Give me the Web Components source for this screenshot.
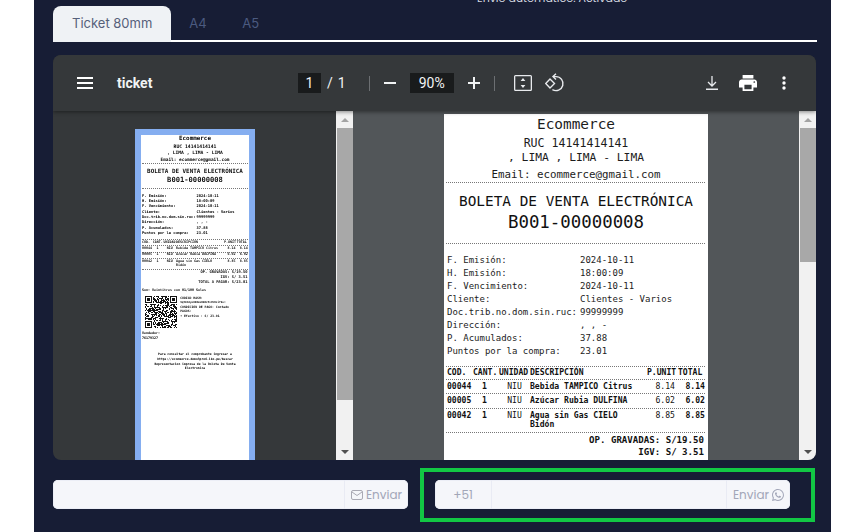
<!DOCTYPE html>
<html lang="es">
<head>
<meta charset="utf-8">
<title>Ticket</title>
<style>
html, body { margin: 0; padding: 0; background: #fff; height: 532px; overflow: hidden; }
</style>
</head>
<body>
<invoice-shell></invoice-shell>
<script>
/**
 * Printed ticket, used for the big page and (with the mini attribute) the thumbnail.
 */
class TicketPage extends HTMLElement {
  constructor() {
    super();
    const info = [
      ['F. Emisión:', '2024-10-11'], ['H. Emisión:', '18:00:09'], ['F. Vencimiento:', '2024-10-11'],
      ['Cliente:', 'Clientes - Varios'], ['Doc.trib.no.dom.sin.ruc:', '99999999'], ['Dirección:', ', , -'],
      ['P. Acumulados:', '37.88'], ['Puntos por la compra:', '23.01'],
    ];
    const items = [
      ['00044', '1', 'NIU', 'Bebida TAMPICO Citrus', '8.14', '8.14'],
      ['00005', '1', 'NIU', 'Azúcar Rubia DULFINA', '6.02', '6.02'],
      ['00042', '1', 'NIU', 'Agua sin Gas CIELO Bidón', '8.85', '8.85'],
    ];
    this.attachShadow({mode: 'open'});
    this.shadowRoot.innerHTML = `
<style>
:host { display: block; width: 264px; height: 800px; background: #fff; color: #1c1c1c;
  font-family: "DejaVu Sans Mono", monospace; overflow: hidden; }
:host([mini]) { zoom: 0.41; filter: blur(0.2px); font-weight: 700; color: #000; }
:host(:not([mini])) .below { display: none; }
.head { text-align: center; padding-top: 1px; }
.head div { height: 16px; line-height: 15px; font-size: 11.3px; white-space: nowrap; }
.head .name { height: 21px; line-height: 19px; font-size: 14.4px; }
.head .ruc { font-size: 11.6px; height: 14px; }
.head .mail { font-size: 10.8px; height: 16px; line-height: 18px; }
hr { border: 0; border-top: 1px dotted #777; margin: 0 3px 0 2px; }
.doc { text-align: center; color: #111; padding: 9px 0 9px; }
.doc div { font-size: 14.4px; line-height: 19px; white-space: nowrap; }
.doc .num { font-size: 17.4px; line-height: 23px; }
.info { padding: 10px 3px 8px; display: grid; grid-template-columns: 133px 1fr; font-size: 9px; line-height: 13px; }
.row { display: grid; grid-template-columns: 26px 26px 31px 117px 31px 27px; padding: 0 0 0 3px; font-size: 8.1px; line-height: 9.5px; color: #111; }
.row > :nth-child(1), .row > :nth-child(2), .row > :nth-child(4), .row > :nth-child(6) { font-weight: 700; }
.row > :nth-child(3) { text-align: center; }
.item { padding: 2px 0 2px 3px; }
.item > :nth-child(2) { padding-left: 9px; }
.item > :nth-child(5) { text-align: right; padding-right: 3px; }
.item > :nth-child(6) { text-align: right; }
.item > :nth-child(4) { padding-right: 14px; }
.th { padding-top: 1px; padding-bottom: 1px; white-space: nowrap; }
.th > * { font-weight: 700; text-align: left !important; }
.totals { padding: 1px 4px 0 0; text-align: right; font-size: 9.1px; line-height: 12px; font-weight: 700; color: #111; white-space: pre; }
.son { padding: 9px 3px 8px; font-size: 8.1px; white-space: nowrap; }
.son b { font-weight: 700; }
.pay { display: flex; gap: 8px; padding: 0 3px 0 10px; font-size: 7.6px; line-height: 11px; color: #111; }
.pay svg { flex: none; width: 78px; height: 78px; }
.pay div { min-width: 0; }
.pay b { display: block; }
.hash { font-size: 6.6px; white-space: nowrap; }
.seller { padding: 7px 3px 0; font-size: 8.1px; line-height: 13px; }
.seller b { display: block; }
.foot { padding: 27px 8px 0; text-align: center; font-size: 7.5px; line-height: 11.4px; }
</style>
<div class="head">
  <div class="name">Ecommerce</div>
  <div class="ruc">RUC 14141414141</div>
  <div>, LIMA , LIMA - LIMA</div>
  <div class="mail">Email: ecommerce@gmail.com</div>
</div>
<hr>
<div class="doc">
  <div>BOLETA DE VENTA ELECTRÓNICA</div>
  <div class="num">B001-00000008</div>
</div>
<hr>
<div class="info">${info.map(([k, v]) => `<span>${k}</span><span>${v}</span>`).join('')}</div>
<hr>
<div class="row th"><span>COD.</span><span>CANT.</span><span>UNIDAD</span><span>DESCRIPCIÓN</span><span>P.UNIT</span><span>TOTAL</span></div>
<hr>
${items.map((it) => `<div class="row item">${it.map((c) => `<span>${c}</span>`).join('')}</div><hr>`).join('')}
<div class="totals">OP. GRAVADAS: S/19.50
IGV: S/ 3.51<span class="below">
TOTAL A PAGAR: S/23.01</span></div>
<div class="below">
<div class="son">Son: <b>Veintitres con 01/100 Soles</b></div>
<div class="pay">
  ${this.qrCode()}
  <div>
    <b>CÓDIGO HASH:</b>
    <span class="hash">9q50Jdyo08HmxRbN2IvPhDzi70s=</span>
    <b>CONDICIÓN DE PAGO: Contado</b>
    <b>PAGOS:</b>
    <span>• Efectivo : S/ 23.01</span>
  </div>
</div>
<div class="seller"><b>Vendedor:</b>76179327</div>
<div class="foot">Para consultar el comprobante ingresar a https://ecommerce.demo3pro6.iko.pe/buscar Representacion impresa de la Boleta De Venta Electronica</div>
</div>
`;
  }

  /** Draws a QR-looking square with a fixed pseudo random fill. */
  qrCode() {
    const size = 33;
    let seed = 73;
    let cells = '';
    const inFinder = (x, y) => (x < 8 && y < 8) || (x > size - 9 && y < 8) || (x < 8 && y > size - 9);
    for (let y = 0; y < size; y++) {
      for (let x = 0; x < size; x++) {
        seed = (seed * 137 + 59) % 1009;
        if (!inFinder(x, y) && seed % 2) cells += `M${x} ${y}h1v1h-1z`;
      }
    }
    const finder = (x, y) => `M${x} ${y}h7v7h-7zM${x + 1} ${y + 1}v5h5v-5zM${x + 2} ${y + 2}h3v3h-3z`;
    return `<svg viewBox="0 0 ${size} ${size}" shape-rendering="crispEdges"><path fill="#111" fill-rule="evenodd" d="${finder(0, 0)}${finder(size - 7, 0)}${finder(0, size - 7)}"/><path fill="#111" d="${cells}"/></svg>`;
  }
}

/**
 * Chrome style scrollbar. thumb attribute is the thumb height in px.
 */
class PdfScrollbar extends HTMLElement {
  constructor() {
    super();
    this.attachShadow({mode: 'open'});
    this.shadowRoot.innerHTML = `
<style>
:host { display: flex; flex-direction: column; flex: none; width: 17px; background: #f1f1f1; }
.arrow { flex: none; height: 17px; display: flex; align-items: center; justify-content: center; }
.arrow i { width: 0; height: 0; border-left: 4px solid transparent; border-right: 4px solid transparent; }
.up i { border-bottom: 4px solid #a3a3a3; }
.down i { border-top: 4px solid #505050; }
.track { flex: 1; }
.thumb { height: var(--thumb, 100px); background: #a8a8a8; margin: 0 0 0 1px; }
</style>
<div class="arrow up"><i></i></div>
<div class="track"><div class="thumb"></div></div>
<div class="arrow down"><i></i></div>
`;
  }

  connectedCallback() {
    this.style.setProperty('--thumb', this.getAttribute('thumb') + 'px');
  }
}

/**
 * Top bar of the pdf viewer.
 */
class PdfToolbar extends HTMLElement {
  constructor() {
    super();
    this.attachShadow({mode: 'open'});
    this.shadowRoot.innerHTML = `
<style>
:host { display: grid; grid-template-columns: 245px auto 1fr; align-items: center; height: 56px; flex: none;
  background: #35383a; color: #f1f3f4; font-family: Roboto, sans-serif; font-size: 14px;
  box-shadow: 0 1px 4px rgba(0, 0, 0, 0.45); position: relative; z-index: 1; }
svg { display: block; flex: none; }
.left { display: flex; align-items: center; padding-left: 24px; }
.title { margin-left: 24px; font-weight: 700; font-size: 14px; }
.mid { display: flex; align-items: center; }
.box { background: #191b1c; height: 20px; line-height: 20px; text-align: center; font-size: 14px; }
.page { width: 23px; }
.zoom { width: 44px; margin-left: 14px; }
.slash { margin-left: 6px; }
.total { margin-left: 5px; }
.sep { width: 1px; height: 15px; background: #6c6f72; }
.right { display: flex; align-items: center; justify-content: flex-end; padding-right: 30px; }
</style>
<div class="left">
  <svg width="16" height="13" viewBox="0 0 16 13" fill="#fff"><rect width="16" height="2" y="0"/><rect width="16" height="2" y="5"/><rect width="16" height="2" y="10"/></svg>
  <span class="title">ticket</span>
</div>
<div class="mid">
  <span class="box page">1</span><span class="slash">/</span><span class="total">1</span>
  <span class="sep" style="margin-left:23px"></span>
  <svg style="margin-left:14px" width="12" height="2" fill="#f1f3f4"><rect width="12" height="2"/></svg>
  <span class="box zoom">90%</span>
  <svg style="margin-left:14px" width="12" height="12" fill="#f1f3f4"><path d="M5 0h2v5h5v2H7v5H5V7H0V5h5z"/></svg>
  <span class="sep" style="margin-left:14px"></span>
  <svg style="margin-left:19px" width="18" height="16" viewBox="0 0 18 16" fill="#e8eaed"><path fill-rule="evenodd" d="M1.5 0h15A1.5 1.5 0 0 1 18 1.5v13a1.5 1.5 0 0 1-1.5 1.500h-15A1.500 1.500 0 0 1 0 14.500v-13A1.500 1.500 0 0 1 1.500 0zM1.300 1.300v13.400h15.400V1.300z"/><path d="M9 3l2.400 3H6.600zM9 13l-2.400-3h4.800z"/></svg>
  <svg style="margin-left:13px" width="20" height="20" viewBox="0 0 20 20" fill="none" stroke="#e8eaed" stroke-width="1.400"><path d="M5 6l4.500 4.500L5 15 .7 10.500z"/><path d="M8.500 3.600H11a7 7 0 1 1-3.600 13"/><path d="M11 .8L8 3.600l3 2.800"/></svg>
</div>
<div class="right">
  <svg width="12" height="14" viewBox="0 0 12 14" fill="none" stroke="#e8eaed" stroke-width="1.300"><path d="M6 0v9.500M2 6l4 4 4-4"/><path d="M0 13.300h12" stroke-width="1.400"/></svg>
  <svg style="margin-left:21px" width="18" height="16" viewBox="2 3 20 18" preserveAspectRatio="none" fill="#fff"><path d="M19 8H5c-1.660 0-3 1.340-3 3v6h4v4h12v-4h4v-6c0-1.660-1.340-3-3-3zm-3 11H8v-5h8v5zm3-7c-.550 0-1-.450-1-1s.450-1 1-1 1 .450 1 1-.450 1-1 1zm-1-9H6v4h12V3z"/></svg>
  <svg style="margin-left:25px" width="4" height="14" viewBox="0 0 4 14" fill="#fff"><circle cx="2" cy="2" r="1.700"/><circle cx="2" cy="7" r="1.700"/><circle cx="2" cy="12" r="1.700"/></svg>
</div>
`;
  }
}

/**
 * Embedded pdf viewer: toolbar, thumbnails and the page.
 */
class PdfViewer extends HTMLElement {
  constructor() {
    super();
    this.attachShadow({mode: 'open'});
    this.shadowRoot.innerHTML = `
<style>
:host { display: flex; flex-direction: column; height: 405px; margin-top: 13px; border-radius: 8px; overflow: hidden; background: #35383a; }
.body { flex: 1; display: flex; min-height: 0; }
.side { flex: 1; display: flex; justify-content: center; padding: 18px 0 0 1px; min-width: 0; overflow: hidden; }
.thumb { border: 6px solid #85aef0; border-bottom: 0; align-self: flex-start; }
.main { flex: none; width: 463px; display: flex; background: #525659; }
.stage { flex: 1; padding: 3px 0 0 91px; overflow: hidden; min-width: 0; }
</style>
<pdf-toolbar></pdf-toolbar>
<div class="body">
  <div class="side"><div class="thumb"><ticket-page mini></ticket-page></div></div>
  <pdf-scrollbar thumb="272"></pdf-scrollbar>
  <div class="main">
    <div class="stage"><ticket-page></ticket-page></div>
    <pdf-scrollbar thumb="134"></pdf-scrollbar>
  </div>
</div>
`;
  }
}

/**
 * Tabs for the paper format.
 */
class DocTabs extends HTMLElement {
  constructor() {
    super();
    this.attachShadow({mode: 'open'});
    this.shadowRoot.innerHTML = `
<style>
:host { display: flex; height: 34px; border-bottom: 2px solid #fff; font-family: Inter, sans-serif; font-size: 13px; margin-right: -1px; }
span { padding: 0 17.5px 0 18px; line-height: 34px; color: #4b5a80; height: 36px; white-space: nowrap; }
.active { background: #eff2f5; color: #56607a; border-radius: 8px 8px 0 0; padding: 0 19px; }
</style>
<span class="active">Ticket 80mm</span><span>A4</span><span>A5</span>
`;
  }
}

/**
 * Input group with a send button, optional prefix through the prefix attribute.
 */
class SendField extends HTMLElement {
  constructor() {
    super();
    this.attachShadow({mode: 'open'});
    const prefix = this.getAttribute('prefix');
    this.shadowRoot.innerHTML = `
<style>
:host { display: flex; height: 29px; background: #f5f6fa; border-radius: 5px; color: #a2a6b8;
  font-family: Poppins, Lato, sans-serif; font-size: 12px; box-shadow: inset 0 0 0 1px #eceef6; position: relative; }
.pre { width: 56px; display: flex; align-items: center; justify-content: center; border-right: 1px solid #e9ebf4; }
.grow { flex: 1; }
.btn { display: flex; align-items: center; gap: 3px; padding: 0 6px; border-left: 1px solid #e9ebf4; }
svg { display: block; }
:host([marked])::after { content: ""; position: absolute; inset: -12px -25px -13px -15px; border: 4px solid #12c744; pointer-events: none; }
</style>
${prefix ? `<span class="pre">${prefix}</span>` : ''}
<span class="grow"></span>
<span class="btn"><slot></slot></span>
`;
  }
}

/**
 * Page frame.
 */
class InvoiceShell extends HTMLElement {
  constructor() {
    super();
    this.attachShadow({mode: 'open'});
    this.shadowRoot.innerHTML = `
<style>
:host { display: block; width: 797px; height: 532px; margin-left: 34px; padding: 0 15px 0 19px; box-sizing: border-box;
  background: #171d35; overflow: hidden; }
.status { height: 6px; overflow: hidden; display: flex; align-items: flex-end; padding: 0 0 0 424px; box-sizing: border-box;
  color: #d5d8e0; font-family: Poppins, Lato, sans-serif; font-size: 11px; line-height: 15px; white-space: nowrap; }
.send { display: grid; grid-template-columns: 355px 355px; gap: 27px; margin-top: 20px; }
svg { display: block; }
</style>
<div class="status"><span>Envío automático: Activado</span></div>
<doc-tabs></doc-tabs>
<pdf-viewer></pdf-viewer>
<div class="send">
  <send-field>
    <svg width="12" height="10" viewBox="0 0 12 10" fill="none" stroke="#a9a9b4" stroke-width="1"><rect x=".5" y=".5" width="11" height="9" rx="1.500"/><path d="M1 2l5 3.500L11 2"/></svg>
    <span>Enviar</span>
  </send-field>
  <send-field prefix="+51" marked>
    <span>Enviar</span>
    <svg width="12" height="12" viewBox="0 0 16 16" fill="#a2a6b8"><path d="M13.601 2.326A7.854 7.854 0 0 0 7.994 0C3.627 0 .068 3.558.064 7.926c0 1.399.366 2.760 1.057 3.965L0 16l4.204-1.102a7.933 7.933 0 0 0 3.790.965h.004c4.368 0 7.926-3.558 7.930-7.930A7.898 7.898 0 0 0 13.600 2.326zM7.994 14.521a6.573 6.573 0 0 1-3.356-.920l-.240-.144-2.494.654.666-2.433-.156-.251a6.560 6.560 0 0 1-1.007-3.505c0-3.626 2.957-6.584 6.591-6.584a6.560 6.560 0 0 1 4.660 1.931 6.557 6.557 0 0 1 1.928 4.660c-.004 3.639-2.961 6.592-6.592 6.592zm3.615-4.934c-.197-.099-1.170-.578-1.353-.646-.182-.065-.315-.099-.445.099-.133.197-.513.646-.627.775-.114.133-.232.148-.430.050-.197-.100-.836-.308-1.592-.985-.590-.525-.985-1.175-1.103-1.372-.114-.198-.011-.304.088-.403.087-.088.197-.232.296-.346.100-.114.133-.198.198-.330.065-.134.034-.248-.015-.347-.050-.099-.445-1.076-.612-1.470-.160-.389-.323-.335-.445-.340-.114-.007-.247-.007-.380-.007a.729.729 0 0 0-.529.247c-.182.198-.691.677-.691 1.654 0 .977.710 1.916.810 2.049.098.133 1.394 2.132 3.383 2.992.470.205.840.326 1.129.418.475.152.904.129 1.246.080.380-.058 1.171-.480 1.338-.943.164-.464.164-.860.114-.943-.049-.084-.182-.133-.380-.232z"/></svg>
  </send-field>
</div>
`;
  }
}

window.customElements.define('ticket-page', TicketPage);
window.customElements.define('pdf-scrollbar', PdfScrollbar);
window.customElements.define('pdf-toolbar', PdfToolbar);
window.customElements.define('pdf-viewer', PdfViewer);
window.customElements.define('doc-tabs', DocTabs);
window.customElements.define('send-field', SendField);
window.customElements.define('invoice-shell', InvoiceShell);
</script>
</body>
</html>
